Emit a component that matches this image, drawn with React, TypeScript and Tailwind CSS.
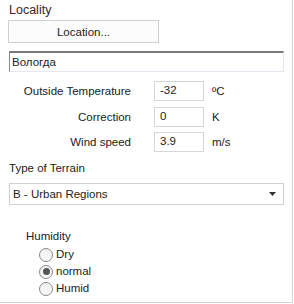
import React from 'react';

const font = { fontFamily: '"Liberation Sans", Arial, sans-serif' };

const NumberRow = ({ label, value, unit }: { label: string; value: string; unit: string }) => (
  <div className="flex items-center h-[20px]">
    <div className="w-[124px] text-right pr-[1px]">{label}</div>
    <div className="ml-[22px] w-[50px] h-[20px] border border-[#d6d6d6] bg-white flex items-center pl-[5px] leading-none">
      {value}
    </div>
    <div className="ml-[8px]">{unit}</div>
  </div>
);

const Radio = ({ label, checked }: { label: string; checked?: boolean }) => (
  <label className="flex items-center h-[17px] gap-[3px] leading-[17px]">
    <span className="w-[14px] h-[14px] rounded-full border border-[#8a8a8a] bg-gradient-to-b from-[#f0f0f0] to-[#fafafa] flex items-center justify-center">
      {checked && <span className="w-[7px] h-[7px] rounded-full bg-[#555]" />}
    </span>
    <span>{label}</span>
  </label>
);

export default function App() {
  return (
    <div style={font} className="w-[294px] h-[304px] bg-white text-[11.5px] text-[#222] leading-[16px]">
      <div className="w-[293px] h-[303px] border-r border-b border-[#d4d4d4] pl-[8px] pt-[2px]">
        <div className="pl-[1px] text-[12.5px] text-[#3a2626]">Locality</div>
        <button className="mt-[2px] w-[151px] h-[23px] border border-[#d0d0d0] bg-[#fcfcfc] flex items-center justify-center">
          Location...
        </button>
        <div className="mt-[8px] ml-[1px] w-[275px] h-[21px] border-t-2 border-l border-t-[#7a7a7a] border-l-[#8c8c8c] border-r border-b border-r-[#e6e6f0] border-b-[#e6e6f0] flex items-center pl-[2px]">
          Вологда
        </div>
        <div className="mt-[9px] flex flex-col gap-[5.5px]">
          <NumberRow label="Outside Temperature" value="-32" unit="ºC" />
          <NumberRow label="Correction" value="0" unit="K" />
          <NumberRow label="Wind speed" value="3.9" unit="m/s" />
        </div>
        <div className="mt-[8px] ml-[1px]">Type of Terrain</div>
        <div className="mt-[7px] ml-[1px] w-[275px] h-[22px] border border-[#d0d0d0] flex items-center justify-between pl-[3px] pr-[7px]">
          <span>B - Urban Regions</span>
          <svg width="7" height="4" viewBox="0 0 7 4">
            <path d="M0 0h7L3.5 4z" fill="#333" />
          </svg>
        </div>
        <div className="mt-[23px] ml-[18px]">Humidity</div>
        <div className="mt-[2px] ml-[31px] flex flex-col">
          <Radio label="Dry" />
          <Radio label="normal" checked />
          <Radio label="Humid" />
        </div>
      </div>
    </div>
  );
}
